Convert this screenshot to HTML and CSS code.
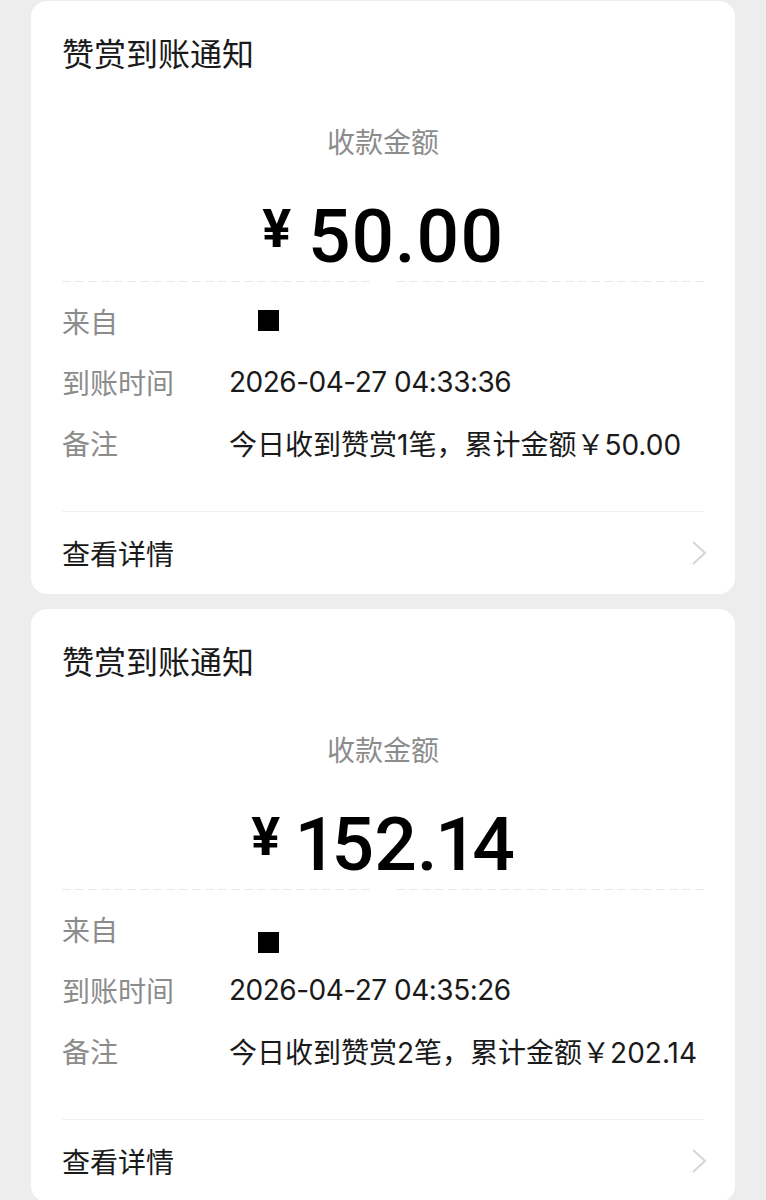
FILE: index.html
```html
<!DOCTYPE html>
<html lang="zh-CN">
<head>
    <meta charset="UTF-8">
    <meta name="viewport" content="width=device-width, initial-scale=1.0">
    <title>赞赏到账通知</title>
    <link rel="stylesheet" href="styles.css">
</head>
<body>
    <div class="list">
        <div class="card">
            <div class="card-title">赞赏到账通知</div>
            <div class="amount-label">收款金额</div>
            <div class="amount"><span class="yen">¥</span>50.00</div>
            <div class="dash"><span></span><span></span></div>
            <div class="rows">
                <div class="row"><span class="key">来自</span><span class="val"><i class="mark"></i></span></div>
                <div class="row"><span class="key">到账时间</span><span class="val time">2026-04-27 04:33:36</span></div>
                <div class="row"><span class="key">备注</span><span class="val">今日收到赞赏1笔，累计金额￥50.00</span></div>
            </div>
            <div class="card-foot">
                <span>查看详情</span>
                <svg class="chevron" width="16" height="26" viewBox="0 0 16 26"><polyline points="2,2 14,13 2,24" fill="none" stroke="#d6d6d6" stroke-width="2"/></svg>
            </div>
        </div>

        <div class="card">
            <div class="card-title">赞赏到账通知</div>
            <div class="amount-label">收款金额</div>
            <div class="amount"><span class="yen">¥</span>152.14</div>
            <div class="dash"><span></span><span></span></div>
            <div class="rows">
                <div class="row"><span class="key">来自</span><span class="val"><i class="mark mark-low"></i></span></div>
                <div class="row"><span class="key">到账时间</span><span class="val time">2026-04-27 04:35:26</span></div>
                <div class="row"><span class="key">备注</span><span class="val">今日收到赞赏2笔，累计金额￥202.14</span></div>
            </div>
            <div class="card-foot">
                <span>查看详情</span>
                <svg class="chevron" width="16" height="26" viewBox="0 0 16 26"><polyline points="2,2 14,13 2,24" fill="none" stroke="#d6d6d6" stroke-width="2"/></svg>
            </div>
        </div>
    </div>
</body>
</html>
```

FILE: styles.css
```css
/* notification list */
body {
    margin: 0;
    padding: 0;
    background-color: #ededed;
    font-family: Inter, "Noto Sans CJK SC", sans-serif;
    color: #1a1a1a;
}
.list {
    padding: 1px 31px 0;
}
.card {
    background-color: #fff;
    border-radius: 16px;
    padding: 0 31px;
    margin-bottom: 15px;
}
.card-title {
    font-size: 32px;
    line-height: 108px;
    height: 108px;
}
.amount-label {
    font-size: 28px;
    line-height: 68px;
    color: #8c8c8c;
    text-align: center;
}
.amount {
    font-family: Roboto, sans-serif;
    font-weight: 500;
    font-size: 75px;
    line-height: 80px;
    height: 80px;
    padding: 19px 0 5px;
    text-align: center;
    color: #000;
    font-feature-settings: "pnum";
}
.yen {
    font-size: 54px;
    font-weight: 700;
    line-height: 0;
    vertical-align: 15px;
    margin-right: 17px;
}
.dash {
    display: flex;
    gap: 26px;
    height: 1px;
}
.dash span {
    flex: 1;
    background-image: repeating-linear-gradient(to right, #e9e9e9 0 9px, transparent 9px 13px);
}
.rows {
    padding-top: 8px;
}
.row {
    display: flex;
    align-items: center;
    height: 61px;
    font-size: 28px;
}
.key {
    width: 167px;
    color: #8c8c8c;
}
.val {
    color: #1a1a1a;
}
.time {
    letter-spacing: -0.5px;
}
.mark {
    display: block;
    width: 21px;
    height: 21px;
    margin-left: 29px;
    background-color: #000;
}
.mark-low {
    margin-top: 28px;
}
.card-foot {
    margin-top: 38px;
    border-top: 1px solid #f0f0f0;
    height: 82px;
    display: flex;
    align-items: center;
    justify-content: space-between;
    font-size: 28px;
}
.chevron {
    margin-right: -3px;
}
```
